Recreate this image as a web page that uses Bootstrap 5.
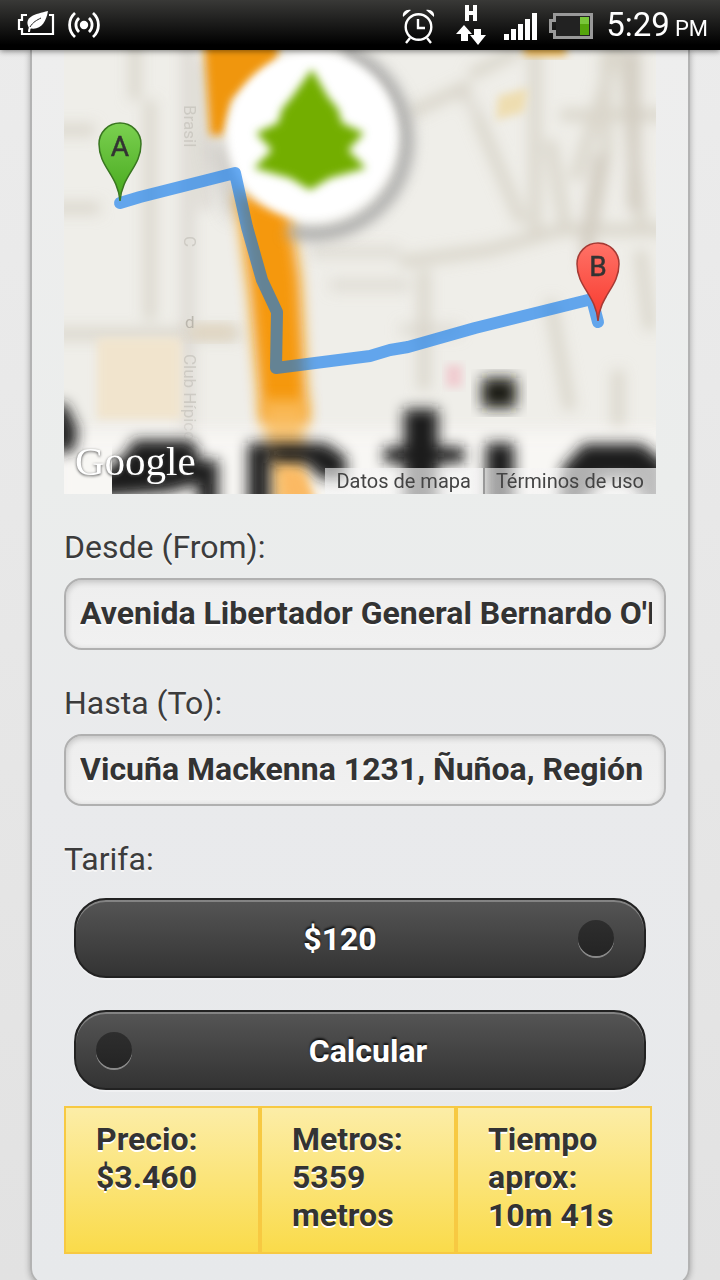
<!DOCTYPE html>
<html lang="es">
<head>
<meta charset="utf-8">
<meta name="viewport" content="width=device-width, initial-scale=1">
<title>Tarifa de taxi</title>
<link href="https://cdn.jsdelivr.net/npm/bootstrap@5.3.0/dist/css/bootstrap.min.css" rel="stylesheet">
<style>
body { font-family: Roboto, "Noto Sans", sans-serif; font-size: 32px; line-height: 40px; color: #333; background: linear-gradient(#ececec, #e2e2e2); }
.status-bar { height: 50px; padding: 0 12px 0 16px; background: linear-gradient(#393937, #000 90%); color: #fff; box-shadow: 0 1px 6px rgba(0,0,0,.5); z-index: 2; }
.clock { font-size: 33px; line-height: 44px; padding: 4px 0 0 8px; gap: 5px; }
.clock small { font-size: 22px; }
.screen { scrollbar-width: none; padding: 0 30px 16px; }
.screen::-webkit-scrollbar { display: none; }
.panel { border: 2px solid #b3b3b3; border-top: 0; border-radius: 0 0 18px 18px; background: linear-gradient(#eee, #ebedec 35%, #e9eaec 60%, #e7e9eb); box-shadow: 0 1px 6px rgba(0,0,0,.3); padding: 0 32px 30px; text-shadow: 0 2px 0 #f6f6f6; }
.map { margin-bottom: 34px; text-shadow: none; overflow: hidden; }
.logo { left: 11px; bottom: 8px; font: 41px/50px "Liberation Serif", serif; color: #fff; text-shadow: 0 1px 3px #444; }
.logo:hover { color: #fff; }
.terms { font-size: 20px; line-height: 26px; }
.terms a { color: #444; text-decoration: none; background: linear-gradient(90deg, rgba(245,245,245,.6), rgba(245,245,245,.75)); padding: 0 12px 0 11px; }
.terms a + a { border-left: 2px solid #999; }
.field-label { display: block; line-height: 38px; margin-bottom: 12px; color: #3c3c3c; }
.box { width: calc(100% + 10px); height: 72px; border: 2px solid #b0b0b0; border-radius: 18px; background: linear-gradient(#eee, #f1f1f1); box-shadow: inset 0 2px 6px rgba(0,0,0,.2); font-size: 32px; font-weight: 700; color: #333; padding: 0 12px 2px 14px; margin-bottom: 34px; text-shadow: 0 2px 0 #fff; }
.actions { padding: 8px 10px 16px; gap: 32px; }
.pill { width: 100%; height: 80px; border: 2px solid #222; border-radius: 32px; background: linear-gradient(#555, #333); box-shadow: inset 0 2px 0 rgba(255,255,255,.28), 0 2px 0 rgba(255,255,255,.35); color: #fff; font-size: 32px; font-weight: 700; text-align: center; text-align-last: center; text-shadow: 0 -2px 2px #111; }
.pill:hover, .pill:active { color: #fff; }
select.pill { appearance: none; padding: 2px 40px 0 0; }
button.pill { padding: 2px 0 0 16px; }
.dot { width: 36px; height: 36px; top: 22px; border-radius: 50%; background: linear-gradient(#2e2e2e, #242424); box-shadow: 0 2px 0 rgba(255,255,255,.4); pointer-events: none; }
.dot-end { right: 32px; }
.dot-start { left: 22px; }
.results { width: calc(100% - 4px); table-layout: fixed; border-collapse: separate; border-spacing: 0; }
.results td { border: 2px solid #f7c942; background: linear-gradient(#fceda7, #fadb4a); padding: 12px 24px 18px 30px; font-weight: 700; line-height: 38px; vertical-align: top; text-shadow: 0 2px 0 #fff; }
</style>
</head>
<body>
<div class="vh-100 d-flex flex-column overflow-hidden">
  <header class="status-bar d-flex align-items-center flex-shrink-0 position-relative">
    <svg width="90" height="34" viewBox="0 0 90 34" fill="none" stroke="#fff" stroke-width="2.2" aria-hidden="true">
      <path d="M11 7H6v5H3v9h3v5h31V7h-4"/>
      <path d="M13 24c0-3 1-5 3-7" stroke-width="2"/>
      <path d="M13 20C7 9 19 6 32 3c-2 12-8 20-19 17Z" fill="#fff" stroke="none"/>
      <path d="M14 19c3-5 7-7 11-9" stroke="#222" stroke-width="1"/>
      <circle cx="68" cy="17" r="4.2" fill="#fff" stroke="none"/>
      <path d="M63 10a9.500 9.500 0 0 0 0 14M73 10a9.500 9.500 0 0 1 0 14M59 5a16 16 0 0 0 0 24M77 5a16 16 0 0 1 0 24" stroke-width="2.800"/>
    </svg>
    <div class="d-flex align-items-center ms-auto">
      <svg width="204" height="46" viewBox="394 2 204 46" fill="none" aria-hidden="true">
        <g stroke="#fff" stroke-width="2.400">
          <circle cx="418.500" cy="27" r="12.800"/>
          <path d="M418 19v9h7M410 38l-4 5M427 38l4 5"/>
        </g>
        <path d="M403 17c-1-5 3-8 8-7zM434 17c1-5-3-8-8-7z" fill="#fff"/>
        <path d="M465 5h4v6h4V5h4v16h-4v-6h-4v6h-4zM464 25l8 9h-4v7h-7v-7h-5zM474 29h7v6h5l-8 10-8-10h4z" fill="#fff"/>
        <path d="M504 34h5v6h-5zM511 29h5v11h-5zM518 24h5v16h-5zM525 19h5v21h-5zM532 13h5v27h-5z" fill="#fff"/>
        <path d="M554.500 14.500h37v23h-37v-6h-4v-11h4z" stroke="#999" stroke-width="3"/>
        <path d="M556 16h34v20h-34z" fill="#222"/>
        <path d="M580 17h9v18h-9z" fill="#55a50c"/><path d="M580 17h9v7h-9z" fill="#79c63a"/>
      </svg>
      <span class="clock d-flex align-items-baseline"><span>5:29</span><small>PM</small></span>
    </div>
  </header>

  <main class="screen flex-grow-1 overflow-auto">
    <div class="panel">
      <div class="map position-relative">
        <svg class="d-block w-100" viewBox="64 50 592 444" role="img" aria-label="Ruta de A a B">
          <defs>
            <filter id="b4" x="-20%" y="-20%" width="140%" height="140%"><feGaussianBlur stdDeviation="4"/></filter>
            <filter id="b6" x="-30%" y="-30%" width="160%" height="160%"><feGaussianBlur stdDeviation="7"/></filter>
            <filter id="b8" x="-40%" y="-40%" width="180%" height="180%"><feGaussianBlur stdDeviation="9"/></filter>
            <linearGradient id="ga" x1="0" y1="0" x2="0" y2="1"><stop stop-color="#7bd050"/><stop offset="1" stop-color="#45a81c"/></linearGradient>
            <linearGradient id="gb" x1="0" y1="0" x2="0" y2="1"><stop stop-color="#ff7267"/><stop offset="1" stop-color="#f8382c"/></linearGradient>
            <clipPath id="tile"><path d="M112 200h560v300H112z"/></clipPath>
          </defs>
          <path d="M64 50h592v444H64z" fill="#efeee9"/>
          <!-- streets -->
          <g filter="url(#b6)" fill="none" stroke="#d6d1c6" stroke-width="12">
            <path d="M135 40v60M150 100v220M50 130h45M50 208h50M50 334h190" opacity=".8"/>
            <path d="M188 40v460M205 60v150" stroke="#dcd8d2" stroke-width="12"/>
            <path d="M410 113l60-28M470 75l50-25M478 118l44 105M400 262l90-12 70-20h110M535 40v200M560 115h110M550 140l16 90M575 180l30-95 12-45M606 50v105l-15 80M622 50l20 180M550 300l20 110M618 370v60M640 250l10 80M424 270v120" opacity=".85"/>
            <path d="M330 285h80M400 330h60M310 252h90M480 118l-20-30" opacity=".6"/>
            <path d="M600 155l-12 80M588 235v30M634 50v160" stroke="#d0cabf"/>
          </g>
          <path d="M97 338h84v82H97z" fill="#f1e4cd" filter="url(#b4)"/>
          <path d="M190 325h45v14h-45z" fill="#e0d4be" filter="url(#b6)"/>
          <path d="M498 96l30-8-4 24-28 8z" fill="#eeddb0" filter="url(#b4)"/>
          <path d="M524 40h42v16h-42z" fill="#eeb54e" filter="url(#b4)"/>
          <path d="M446 365h16v22h-16z" fill="#f0ccd0" filter="url(#b4)"/>
          <g fill="#c4c1ba" font-family="Roboto, sans-serif" font-size="17" opacity=".7">
            <text transform="translate(184 105) rotate(90)">Brasil</text>
            <text transform="translate(184 236) rotate(90)">C</text>
            <text x="185" y="328" fill="#aaa59c">d</text>
            <text transform="translate(184 354) rotate(90)">Club Hípico</text>
          </g>
          <!-- avenue -->
          <path d="M203 30h75v30l-46 40-9 36h-13z" fill="#f0960c" filter="url(#b4)"/>
          <path d="M206 142h22l20 75h-20z" fill="#c6c3be" filter="url(#b8)" opacity=".8"/>
          <path d="M236 190l54 22 10 68 8 145h-46l-12-130z" fill="#f5980f" filter="url(#b6)"/>
          <!-- park sign -->
          <circle cx="313" cy="140" r="94" fill="none" stroke="#9c9c9b" stroke-width="11" filter="url(#b6)" stroke-dasharray="290 400" transform="rotate(-72 313 140)"/>
          <circle cx="312" cy="136" r="84" fill="#fff" filter="url(#b4)"/>
          <path d="M312 69l16 28 10 12 4 14 22 10-16 17 18 18-36 10-20 12-20-12-36-10 18-18-16-17 22-10 4-14 10-12z" fill="#73ae00" filter="url(#b4)"/>
          <!-- large district name -->
          <path d="M50 430h620v90H50z" fill="#f9f8f6" filter="url(#b8)" opacity=".85"/>
          <g filter="url(#b6)">
            <path d="M40 404h26l12 26-4 22H40z" fill="#222"/>
            <path d="M262 400h46l-4 35 8 80h-40z" fill="#f9bd62" opacity=".85"/>
          </g>
          <g clip-path="url(#tile)">
            <g fill="#1c1c1c" filter="url(#b6)">
              <path d="M96 478l30-24 8-14h56l8 8v36l-30 8-80 6zM198 460h20v70h-20zM248 443h22v85h-22zM270 443h56l20 14v22h-24l-16-16h-32z"/>
              <path d="M404 409h34v38h26v16h-26v54h-34v-54h-20v-16h20zM486 443h28v70h-28zM562 468l22-24h58l24 20v46h-16l-20-30h-28l-24 30h-18z"/>
            </g>
            <path d="M482 378h34v30h-34z" fill="#1c1b18" filter="url(#b6)"/>
            <path d="M282 468l20 6 18 40h-34z" fill="#fbb964" filter="url(#b4)"/>
          </g>
          <!-- route -->
          <path d="M120 203l20-6 95-24 12 54 15 53 15 32-1 56 94-12 20-6 18-3 67-19 117-29 6 23" fill="none" stroke="#0474ee" stroke-opacity=".6" stroke-width="12" stroke-linecap="round" stroke-linejoin="round"/>
          <!-- pins -->
          <g font-family="Roboto, sans-serif" font-size="28" text-anchor="middle" fill="#333" stroke-width="1.500">
            <path d="M120 201c-2-26-21-34-21-57a21 21 0 0 1 42 0c0 23-19 31-21 57z" fill="url(#ga)" stroke="#397620"/>
            <text x="120" y="156" stroke="#333" stroke-width=".5">A</text>
            <path d="M598 321c-2-26-21-34-21-57a21 21 0 0 1 42 0c0 23-19 31-21 57z" fill="url(#gb)" stroke="#a53a34"/>
            <text x="598" y="276" stroke="#333" stroke-width=".5">B</text>
          </g>
        </svg>
        <a href="#" class="logo position-absolute text-decoration-none">Google</a>
        <div class="terms position-absolute bottom-0 end-0 d-flex">
          <a href="#">Datos de mapa</a><a href="#">Términos de uso</a>
        </div>
      </div>

      <form>
        <label class="field-label" for="desde">Desde (From):</label>
        <input class="box d-block" id="desde" type="text" value="Avenida Libertador General Bernardo O'Higgins">
        <label class="field-label" for="hasta">Hasta (To):</label>
        <input class="box d-block" id="hasta" type="text" value="Vicuña Mackenna 1231, Ñuñoa, Región">
        <label class="field-label" for="tarifa">Tarifa:</label>
        <div class="actions d-flex flex-column">
          <div class="position-relative d-flex">
            <select class="pill" id="tarifa"><option>$120</option></select>
            <span class="dot dot-end position-absolute"></span>
          </div>
          <div class="position-relative d-flex">
            <button class="pill" type="button">Calcular</button>
            <span class="dot dot-start position-absolute"></span>
          </div>
        </div>
      </form>

      <table class="results">
        <tbody><tr><td>Precio: $3.460</td><td>Metros: 5359 metros</td><td>Tiempo aprox: 10m 41s</td></tr></tbody>
      </table>
    </div>
  </main>
</div>
<script src="https://cdn.jsdelivr.net/npm/bootstrap@5.3.0/dist/js/bootstrap.bundle.min.js"></script>
</body>
</html>
